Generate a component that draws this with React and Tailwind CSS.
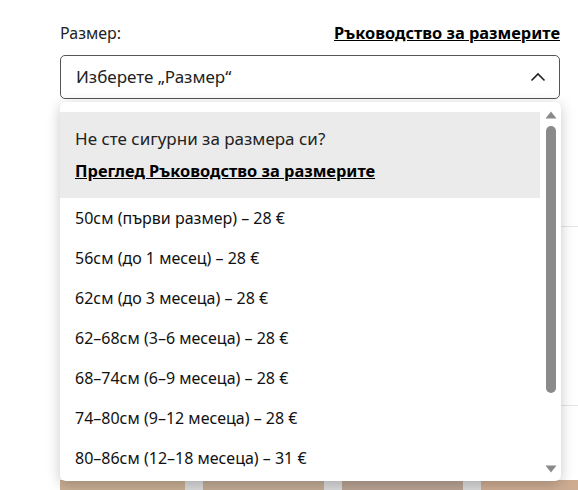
import React from "react";

const options = [
  "50см (първи размер) – 28 €",
  "56см (до 1 месец) – 28 €",
  "62см (до 3 месеца) – 28 €",
  "62–68см (3–6 месеца) – 28 €",
  "68–74см (6–9 месеца) – 28 €",
  "74–80см (9–12 месеца) – 28 €",
  "80–86см (12–18 месеца) – 31 €",
];

export default function App() {
  return (
    <div
      className="relative w-[578px] h-[490px] overflow-hidden bg-white text-[#111]"
      style={{ fontFamily: '"Noto Sans", "Open Sans", sans-serif' }}
    >
      {/* underlying page */}
      <div className="flex flex-col">
        <div className="pl-[60px] w-[560px] pt-[21px]">
          <div className="flex items-center justify-between h-6">
            <span className="text-[16px] text-[#222]">Размер:</span>
            <a className="text-[16.4px] font-bold underline text-black">Ръководство за размерите</a>
          </div>
          <div className="mt-[10px] h-[44px] rounded-[5px] border border-[#555] flex items-center justify-between pl-[15px] pr-[13px]">
            <span className="text-[17px] text-[#222]">Изберете „Размер“</span>
            <svg width="16" height="10" viewBox="0 0 16 10" fill="none">
              <polyline points="1.5,8.5 8,2 14.5,8.5" stroke="#222" strokeWidth="1.6" />
            </svg>
          </div>
        </div>
        <div className="mt-[127px] ml-[300px] h-px bg-[#e5e5e5]" />
        <div className="mt-[178px] ml-[300px] h-px bg-[#e5e5e5]" />
        <div className="mt-[74px] ml-[60px] flex gap-[18px] h-[10px] bg-[#d9d9d9]">
          <div className="w-[125px] bg-[#c7ae93]" />
          <div className="w-[121px] bg-[#c2ab95]" />
          <div className="w-[121px] bg-[#b9a393]" />
          <div className="flex-1 bg-[#cdac92]" />
        </div>
      </div>

      {/* dropdown overlay */}
      <div className="absolute left-[60px] top-[102px] w-[501px] h-[379px] bg-white rounded-[6px] shadow-[0_3px_14px_rgba(0,0,0,0.22)] flex overflow-hidden">
        <div className="flex-1 flex flex-col pt-[10px]">
          <div className="bg-[#ebebeb] px-[15px] pt-[15px] pb-[15px] flex flex-col gap-[8px]">
            <span className="text-[17px] leading-6 text-[#222]">Не сте сигурни за размера си?</span>
            <a className="text-[16.4px] leading-6 font-bold underline text-black">Преглед Ръководство за размерите</a>
          </div>
          {options.map((o) => (
            <div key={o} className="h-[40px] flex items-center px-[15px] text-[16px] text-[#111]">
              {o}
            </div>
          ))}
        </div>
        <div className="w-[21px] flex flex-col items-center pt-[9px] pb-[8px]">
          <svg width="12" height="8" viewBox="0 0 12 8">
            <polygon points="6,0.5 11.5,7.5 0.5,7.5" fill="#8a8a8a" />
          </svg>
          <div className="mt-[7px] w-[10px] h-[267px] rounded-full bg-[#8a8a8a]" />
          <div className="flex-1" />
          <svg width="12" height="8" viewBox="0 0 12 8">
            <polygon points="0.5,0.5 11.5,0.5 6,7.5" fill="#8a8a8a" />
          </svg>
        </div>
      </div>
    </div>
  );
}
